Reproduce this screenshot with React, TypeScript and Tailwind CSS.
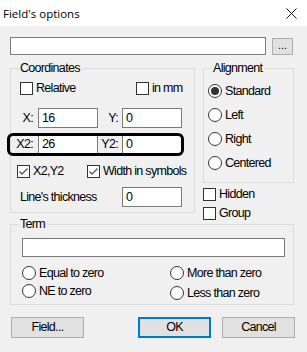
import React from "react";

const font = "font-['Liberation_Sans',Arial,sans-serif] text-[12.5px] tracking-[-0.7px] text-black";

function CheckBox({ label, checked = false }: { label: string; checked?: boolean }) {
  return (
    <label className="flex items-center h-[13px]">
      <span className="w-[13px] h-[13px] shrink-0 border border-[#333] bg-white flex items-center justify-center">
        {checked && (
          <svg width="11" height="11" viewBox="0 0 11 11">
            <polyline points="1.5,5.5 4,8 9.5,2.5" fill="none" stroke="#555" strokeWidth="1.3" />
          </svg>
        )}
      </span>
      <span className="ml-[3px] leading-none whitespace-nowrap">{label}</span>
    </label>
  );
}

function Radio({ label, checked = false }: { label: string; checked?: boolean }) {
  return (
    <label className="flex items-center">
      <span className="w-[14px] h-[14px] shrink-0 rounded-full border border-[#333] bg-white flex items-center justify-center">
        {checked && <span className="w-[8px] h-[8px] rounded-full bg-[#333]" />}
      </span>
      <span className="ml-[3px] leading-none whitespace-nowrap">{label}</span>
    </label>
  );
}

function TextBox({ value = "", className = "" }: { value?: string; className?: string }) {
  return (
    <div className={`bg-white border border-[#7a7a7a] flex items-center pl-[3px] leading-none ${className}`}>
      {value}
    </div>
  );
}

function Group({ title, className = "", children }: { title: string; className?: string; children: React.ReactNode }) {
  return (
    <div className={`relative border border-[#dcdcdc] ${className}`}>
      <span className="absolute -top-[8px] left-[7px] px-[2px] bg-[#f0f0f0] leading-[14px]">{title}</span>
      {children}
    </div>
  );
}

function Btn({ label, primary = false }: { label: string; primary?: boolean }) {
  return (
    <button
      className={`w-[73px] h-[21px] bg-[#e1e1e1] flex items-center justify-center leading-none ${
        primary ? "border-2 border-[#0078d7]" : "border border-[#adadad]"
      }`}
    >
      {label}
    </button>
  );
}

export default function App() {
  return (
    <div className={`w-[307px] h-[352px] bg-[#f0f0f0] flex flex-col ${font}`}>
      {/* Title bar */}
      <div className="h-[26px] bg-white flex items-center justify-between pl-[3px] pr-[10px]">
        <span className="font-['Open_Sans','Noto_Sans',sans-serif] text-[11.5px] tracking-normal leading-none mt-[1px]">Field's options</span>
        <svg width="11" height="11" viewBox="0 0 11 11" className="mt-[1px]">
          <path d="M0.5 0.5 L10.5 10.5 M10.5 0.5 L0.5 10.5" stroke="#111" strokeWidth="1" />
        </svg>
      </div>

      <div className="flex flex-col px-[10px] pt-[11px]">
        {/* Top field */}
        <div className="flex items-start">
          <TextBox className="w-[256px] h-[18px]" />
          <button className="ml-[6px] mt-[1px] w-[21px] h-[17px] bg-[#e1e1e1] border border-[#adadad] flex items-end justify-center pb-[3px] text-[11px] tracking-normal leading-none">
            ...
          </button>
        </div>

        {/* Coordinates + Alignment */}
        <div className="flex items-start h-[145px] mt-[13px]">
          <Group title="Coordinates" className="w-[185px] h-[145px]">
            <div className="flex pt-[13px] pl-[9px]">
              <div className="w-[116px]">
                <CheckBox label="Relative" />
              </div>
              <CheckBox label="in mm" />
            </div>

            <div className="flex items-center mt-[13px]">
              <span className="w-[27px] text-right pr-[5px] leading-none">X:</span>
              <TextBox value="16" className="w-[60px] h-[20px]" />
              <span className="w-[24px] text-right pr-[4px] leading-none">Y:</span>
              <TextBox value="0" className="w-[60px] h-[20px]" />
            </div>

            <div className="relative flex items-center mt-[6px]">
              <span className="w-[27px] text-right pr-[5px] leading-none">X2:</span>
              <TextBox value="26" className="w-[60px] h-[20px]" />
              <span className="w-[24px] text-right pr-[4px] leading-none">Y2:</span>
              <TextBox value="0" className="w-[60px] h-[20px]" />
              <div className="absolute -left-[4px] -top-[1px] w-[177px] h-[23px] border-[3px] border-black rounded-[6px]" />
            </div>

            <div className="flex mt-[11px] pl-[6px]">
              <div className="w-[70px]">
                <CheckBox label="X2,Y2" checked />
              </div>
              <CheckBox label="Width in symbols" checked />
            </div>

            <div className="flex items-center mt-[9px] pl-[9px]">
              <span className="w-[102px] leading-none">Line's thickness</span>
              <TextBox value="0" className="w-[60px] h-[20px]" />
            </div>
          </Group>

          <div className="flex flex-col ml-[8px]">
            <Group title="Alignment" className="w-[91px] h-[115px]">
              <div className="flex flex-col pt-[10px] pl-[4px]">
                <div className="h-[24px] flex items-center">
                  <Radio label="Standard" checked />
                </div>
                <div className="h-[24px] flex items-center">
                  <Radio label="Left" />
                </div>
                <div className="h-[24px] flex items-center">
                  <Radio label="Right" />
                </div>
                <div className="h-[24px] flex items-center">
                  <Radio label="Centered" />
                </div>
              </div>
            </Group>
            <div className="flex flex-col gap-[6px] mt-[5px]">
              <CheckBox label="Hidden" />
              <CheckBox label="Group" />
            </div>
          </div>
        </div>

        {/* Term */}
        <Group title="Term" className="w-[284px] h-[81px] mt-[11px]">
          <div className="pt-[13px] pl-[11px] pr-[7px]">
            <TextBox className="w-[263px] h-[19px]" />
          </div>
          <div className="flex pl-[11px] mt-[7px]">
            <div className="w-[148px] flex flex-col">
              <div className="h-[18px] flex items-center">
                <Radio label="Equal to zero" />
              </div>
              <div className="h-[18px] flex items-center">
                <Radio label="NE to zero" />
              </div>
            </div>
            <div className="flex flex-col">
              <div className="h-[18px] flex items-center">
                <Radio label="More than zero" />
              </div>
              <div className="h-[18px] flex items-center mt-[2px]">
                <Radio label="Less than zero" />
              </div>
            </div>
          </div>
        </Group>

        {/* Buttons */}
        <div className="flex mt-[12px] pl-[1px]">
          <Btn label="Field..." />
          <div className="ml-[54px]">
            <Btn label="OK" primary />
          </div>
          <div className="ml-[11px]">
            <Btn label="Cancel" />
          </div>
        </div>
      </div>
    </div>
  );
}
